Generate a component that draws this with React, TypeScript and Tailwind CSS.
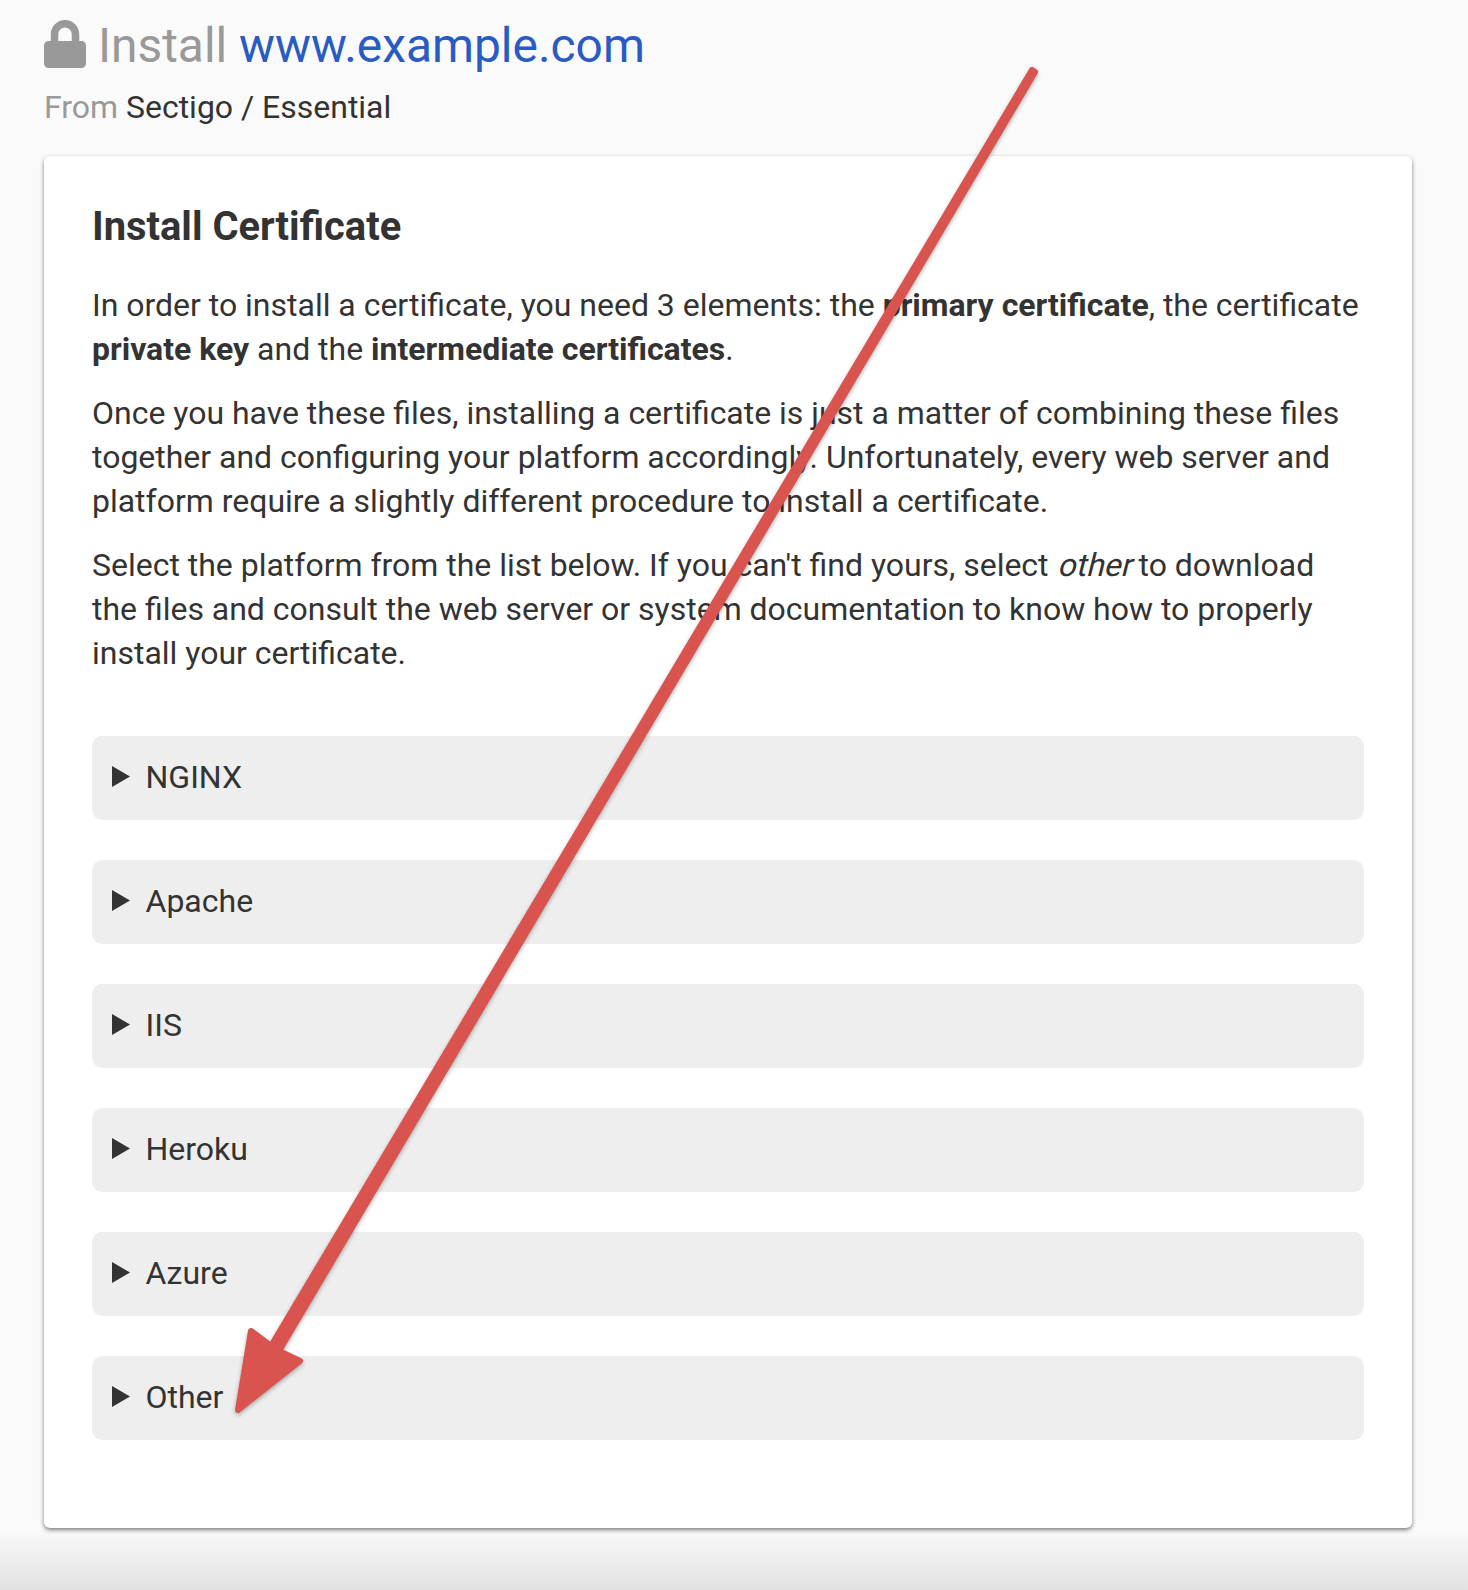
import React from "react";

const platforms = ["NGINX", "Apache", "IIS", "Heroku", "Azure", "Other"];

export default function App() {
  return (
    <div className="relative h-[1590px] w-[1468px] overflow-hidden bg-[#fafafa] px-[44px] font-['Roboto',sans-serif] text-[#333]">
      <header>
        <h1 className="flex items-start pt-[14px] text-[47.9px] leading-[64px] text-[#999]">
          <svg className="mr-3 mt-[6px] h-[48px] w-[42px]" viewBox="0 0 448 512" fill="#999">
            <path d="M400 224h-24v-72C376 68.2 307.800 0 224 0S72 68.200 72 152v72H48c-26.500 0-48 21.500-48 48v192c0 26.500 21.500 48 48 48h352c26.500 0 48-21.500 48-48V272c0-26.500-21.500-48-48-48zm-104 0H152v-72c0-39.700 32.300-72 72-72s72 32.300 72 72v72z" />
          </svg>
          <span>Install <span className="text-[#2a5bc4]">www.example.com</span></span>
        </h1>
        <p className="mt-[7px] text-[31.97px] leading-[44px] text-[#999]">From <span className="text-[#333]">Sectigo / Essential</span></p>
      </header>
      <main className="mt-[27px] h-[1372px] w-[1368px] rounded-[6px] bg-white px-[48px] pt-[45px] shadow-[0_2px_4px_rgba(0,0,0,0.5)]">
        <h2 className="text-[39.9px] font-bold leading-[52px]">Install Certificate</h2>
        <div className="mt-[30px] flex flex-col gap-5 whitespace-nowrap text-[31.97px] leading-[44px]">
          <p>In order to install a certificate, you need 3 elements: the <b>primary certificate</b>, the certificate<br /><b>private key</b> and the <b>intermediate certificates</b>.</p>
          <p>Once you have these files, installing a certificate is just a matter of combining these files<br />together and configuring your platform accordingly. Unfortunately, every web server and<br />platform require a slightly different procedure to install a certificate.</p>
          <p>Select the platform from the list below. If you can't find yours, select <em className="inline-block origin-[50%_75%] -skew-x-[14deg] not-italic">other</em> to download<br />the files and consult the web server or system documentation to know how to properly<br />install your certificate.</p>
        </div>
        <div className="mt-[61px] flex flex-col gap-10">
          {platforms.map((name) => (
            <div key={name} className="flex h-[84px] items-center rounded-[10px] bg-[#eee] pb-[2px] pl-5 text-[32px]">
              <svg className="mb-px mr-[15.5px] h-[21px] w-[18px]" viewBox="0 0 18 21"><path d="M0 0L18 10.500L0 21Z" fill="#333" /></svg>
              {name}
            </div>
          ))}
        </div>
      </main>
      <div className="absolute bottom-0 left-0 h-[60px] w-full bg-gradient-to-b from-transparent to-black/10" />
      <svg className="absolute left-0 top-0 drop-shadow-[0_2px_2px_rgba(0,0,0,0.3)]" width="1468" height="1590">
        <path d="M1032 70L1035 72L279 1351L300 1361L238 1410L251 1331L271 1346Z" fill="#d9534f" stroke="#d9534f" strokeWidth="6" strokeLinejoin="round" />
      </svg>
    </div>
  );
}
